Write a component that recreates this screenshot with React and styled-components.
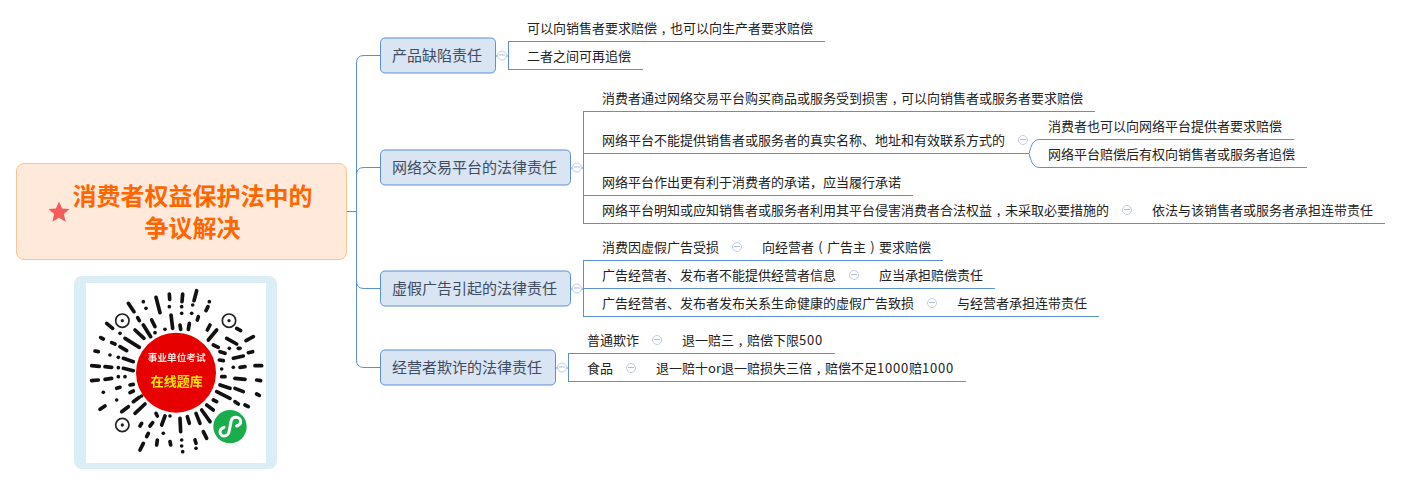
import React from "react";
import styled, { createGlobalStyle } from "styled-components";

const LINE = "#5b8fd6";

const GlobalStyle = createGlobalStyle`
    html, body { margin: 0; padding: 0; background: #fff; }
    body { font-family: "Noto Sans CJK SC", "Liberation Sans", sans-serif; }
`;

const Canvas = styled.div`
    position: relative;
    display: flex;
    gap: 33px;
    width: 1401px;
    height: 485px;
    box-sizing: border-box;
    padding-left: 16px;
    overflow: hidden;
    background: #fff;
`;

const Trunk = styled.svg`
    position: absolute;
    left: 340px;
    top: 40px;
    fill: none;
    stroke: ${LINE};
    stroke-width: 1;
`;

const LeftColumn = styled.div`
    flex: none;
    width: 331px;
    padding-top: 163px;
`;

const RootTopic = styled.div`
    height: 97px;
    box-sizing: border-box;
    display: flex;
    align-items: center;
    justify-content: center;
    gap: 3px;
    padding-right: 3px;
    background: #ffe9da;
    border: 1px solid #fac591;
    border-radius: 8px;
`;

const RootTitle = styled.div`
    width: 240px;
    padding-bottom: 1px;
    text-align: center;
    color: #ff6600;
    font-size: 24px;
    font-weight: 700;
    line-height: 32px;
`;

const QrFrame = styled.div`
    width: 203px;
    height: 193px;
    box-sizing: border-box;
    margin: 16px 0 0 58px;
    padding: 7px 11px 6px 12px;
    background: #dceef5;
    border-radius: 8px;
`;

const QrCard = styled.div`
    width: 180px;
    height: 180px;
    background: #fff;
    overflow: hidden;

    svg { filter: blur(0.4px); }
`;

const Tree = styled.div`
    display: flex;
    flex-direction: column;
    gap: 12px;
    padding-top: 17px;
`;

const Group = styled.div`
    display: flex;
    align-items: center;
    gap: 12px;
    margin-top: ${(p) => p.$push || 0}px;
`;

const Branch = styled.div`
    flex: none;
    position: relative;
    height: 36px;
    box-sizing: border-box;
    padding: 0 13px 2px 11px;
    display: flex;
    align-items: center;
    white-space: nowrap;
    color: #3f4b5e;
    font-size: 15px;
    background: #dae5f3;
    border: 1px solid ${LINE};
    border-radius: 5px;
    /* sits level with the middle of the underlines, not of the text block */
    transform: translateY(11.5px);

    /* stub over to the leaf stack */
    &::after {
        content: "";
        position: absolute;
        left: 100%;
        top: 17px;
        width: 13px;
        height: 1px;
        margin-left: 1px;
        background: ${LINE};
    }
`;

const Stack = styled.div`
    position: relative;
    display: flex;
    flex-direction: column;
    align-items: flex-start;
    gap: 3px;

    /* spine runs from the first underline to the last */
    &::before {
        content: "";
        position: absolute;
        left: 0;
        top: 24px;
        bottom: 0;
        width: 1px;
        background: ${LINE};
    }
`;

const Leaf = styled.div`
    flex: none;
    height: 25px;
    box-sizing: border-box;
    padding: 0 ${(p) => (p.$tail ? 1 : 12)}px 3px 19px;
    display: flex;
    align-items: center;
    white-space: nowrap;
    color: #222;
    font-size: 13px;
    line-height: 22px;
    border-bottom: 1px solid ${LINE};
`;

const SubRow = styled.div`
    display: flex;
    align-items: center;
    height: 53px;
`;

const SubStack = styled.div`
    display: flex;
    flex-direction: column;
    align-items: flex-start;
    gap: 3px;
`;

const SubLeaf = styled(Leaf)`
    padding-left: 8px;
`;

const Fork = styled.svg`
    flex: none;
    fill: none;
    stroke: ${LINE};
    stroke-width: 1;
`;

const Toggle = styled.span`
    flex: none;
    position: relative;
    display: block;
    width: 10px;
    height: 10px;
    margin: 0 ${(p) => (p.$end ? 0 : 20)}px 0 13px;
    box-sizing: border-box;
    background: #fff;
    border: 1px solid #bfcde9;
    border-radius: 50%;

    &::after {
        content: "";
        position: absolute;
        left: 1px;
        right: 1px;
        top: 3px;
        height: 1px;
        background: #aebde0;
    }
`;

const BranchToggle = styled(Toggle)`
    position: absolute;
    left: 100%;
    top: 12px;
    margin: 0 0 0 2px;
    z-index: 1;
`;

const Punct = styled.span`
    display: inline-block;
    width: 13px;
    text-align: center;
`;

const Num = styled.span`
    letter-spacing: 0.78px;
`;

const QR_DASHES = [
    [175,100,192,125],[220,95,220,95],[228,115,228,115],[258,82,270,128],[298,72,299,88],[338,72,336,95],
    [380,62,372,92],[418,95,418,95],[408,122,414,110],[298,110,298,110],[335,110,335,110],[335,130,335,130],
    [368,105,368,105],[365,130,365,130],[303,135,308,175],[330,165,332,178],[358,160,355,178],[385,140,382,150],
    [420,165,412,180],[440,180,415,210],[110,160,128,175],[203,143,208,152],[195,180,222,205],[220,165,242,200],
    [245,150,255,170],[285,178,285,178],[255,188,255,188],[150,190,150,190],[165,205,208,232],[92,203,100,207],
    [125,218,135,222],[150,230,170,242],[75,243,85,245],[120,255,120,255],[145,262,145,262],[160,265,190,275],
    [65,287,88,289],[105,290,125,292],[145,293,145,293],[160,295,190,302],[65,332,85,330],[105,328,125,325],
    [145,320,145,320],[165,320,165,320],[140,355,150,352],[180,345,190,343],[100,367,100,367],[180,368,190,363],
    [140,390,140,390],[190,395,208,382],[90,418,105,408],[155,425,175,410],[195,430,225,402],[215,378,215,378],
    [258,430,262,438],[240,468,248,458],[210,468,215,460],[275,465,285,438],[300,438,300,438],[280,490,280,490],
    [230,500,235,490],[210,540,220,520],[260,525,262,510],[300,515,302,525],[330,445,332,485],[335,510,335,510],
    [335,528,335,528],[338,545,338,545],[352,440,358,460],[378,430,390,460],[395,420,420,455],[375,510,378,520],
    [378,535,378,535],[400,485,410,505],[430,390,440,395],[410,405,430,420],[440,365,480,385],[450,345,480,355],
    [495,355,520,365],[495,325,525,328],[560,330,572,332],[495,395,505,402],[525,405,535,410],[560,372,568,376],
    [455,320,465,320],[455,297,455,297],[490,292,490,292],[510,292,525,290],[555,287,575,287],[490,265,520,258],
    [535,248,548,245],[448,270,460,272],[450,245,465,250],[505,235,510,235],[478,235,478,235],[430,225,445,232],
    [470,205,500,222],[528,212,550,200],[500,175,512,182],
];

const QR_FINDERS = [[157,152],[477,152],[157,465]];

// drawn in 3x units of the frame so the numbers stay whole
const QrCode = () => (
    <svg width="180" height="180" viewBox="48 39 540 540">
        <g stroke="#111" strokeWidth="11" strokeLinecap="round" fill="none">
            {QR_DASHES.map(([x1, y1, x2, y2]) => (
                <line key={`${x1}-${y1}`} x1={x1} y1={y1} x2={x2} y2={y2} />
            ))}
        </g>
        {QR_FINDERS.map(([cx, cy]) => (
            <g key={cx + cy}>
                <circle cx={cx} cy={cy} r="20" fill="none" stroke="#222" strokeWidth="5" />
                <circle cx={cx} cy={cy} r="5" fill="#222" />
            </g>
        ))}
        <circle cx="318" cy="308" r="120" fill="#e60000" />
        <text x="320" y="274" textAnchor="middle" fontSize="29" fontWeight="700" fill="#ffe3dc">事业单位考试</text>
        <text x="320" y="349" textAnchor="middle" fontSize="39" fontWeight="700" fill="#ffe600">在线题库</text>
        <circle cx="480" cy="470" r="56" fill="#fff" />
        <circle cx="480" cy="470" r="50" fill="#1aad4e" />
        <path
            d="M462 472C454 475 450 480 450 485C450 493 456 498 463 498C470 498 476 492 477 485L483 455C484 447 490 442 498 442C506 442 512 448 512 455C512 462 506 466 500 468"
            fill="none"
            stroke="#fff"
            strokeWidth="9"
            strokeLinecap="round"
        />
    </svg>
);

const Star = () => (
    <svg width="22" height="22" viewBox="0 0 22 22">
        <path d="M11 0.5l3.1 7 7.4.6-5.6 5 1.7 7.6L11 16.7l-6.6 4 1.7-7.6-5.6-5 7.4-.6z" fill="#f25c5c" />
    </svg>
);

// page coords minus the svg's own left/top
const TRUNK = `
    M7 171.5H16.5
    M40 15.5H24Q16.5 15.5 16.5 23V171.5
    M40 127.5H24Q16.5 127.5 16.5 135V171.5
    M40 248.5H24Q16.5 248.5 16.5 241V171.5
    M40 327.5H24Q16.5 327.5 16.5 320V171.5
`;

const App = () => (
    <Canvas>
        <GlobalStyle />
        <Trunk width="41" height="345">
            <path d={TRUNK} />
        </Trunk>

        <LeftColumn>
            <RootTopic>
                <Star />
                <RootTitle>消费者权益保护法中的<br />争议解决</RootTitle>
            </RootTopic>
            <QrFrame>
                <QrCard>
                    <QrCode />
                </QrCard>
            </QrFrame>
        </LeftColumn>

        <Tree>
            <Group>
                <Branch>产品缺陷责任<BranchToggle /></Branch>
                <Stack>
                    <Leaf>可以向销售者要求赔偿<Punct>,</Punct>也可以向生产者要求赔偿</Leaf>
                    <Leaf>二者之间可再追偿</Leaf>
                </Stack>
            </Group>

            <Group $push={5}>
                <Branch>网络交易平台的法律责任<BranchToggle /></Branch>
                <Stack>
                    <Leaf>消费者通过网络交易平台购买商品或服务受到损害<Punct>,</Punct>可以向销售者或服务者要求赔偿</Leaf>
                    <SubRow>
                        <Leaf $tail>网络平台不能提供销售者或服务者的真实名称、地址和有效联系方式的<Toggle $end /></Leaf>
                        <Fork width="11" height="53">
                            <path d="M0 38.5C2 32 3 24.5 11 24.5M0 38.5C2 45 3 52.5 11 52.5" />
                        </Fork>
                        <SubStack>
                            <SubLeaf>消费者也可以向网络平台提供者要求赔偿</SubLeaf>
                            <SubLeaf>网络平台赔偿后有权向销售者或服务者追偿</SubLeaf>
                        </SubStack>
                    </SubRow>
                    <Leaf>网络平台作出更有利于消费者的承诺，应当履行承诺</Leaf>
                    <Leaf>网络平台明知或应知销售者或服务者利用其平台侵害消费者合法权益<Punct>,</Punct>未采取必要措施的<Toggle />依法与该销售者或服务者承担连带责任</Leaf>
                </Stack>
            </Group>

            <Group>
                <Branch>虚假广告引起的法律责任<BranchToggle /></Branch>
                <Stack>
                    <Leaf>消费因虚假广告受损<Toggle />向经营者<Punct>(</Punct>广告主<Punct>)</Punct>要求赔偿</Leaf>
                    <Leaf>广告经营者、发布者不能提供经营者信息<Toggle />应当承担赔偿责任</Leaf>
                    <Leaf>广告经营者、发布者发布关系生命健康的虚假广告致损<Toggle />与经营者承担连带责任</Leaf>
                </Stack>
            </Group>

            <Group>
                <Branch>经营者欺诈的法律责任<BranchToggle /></Branch>
                <Stack>
                    <Leaf>普通欺诈<Toggle />退一赔三<Punct>,</Punct>赔偿下限<Num>500</Num></Leaf>
                    <Leaf>食品<Toggle />退一赔十or退一赔损失三倍<Punct>,</Punct>赔偿不足<Num>1000</Num>赔<Num>1000</Num></Leaf>
                </Stack>
            </Group>
        </Tree>
    </Canvas>
);

export default App;
